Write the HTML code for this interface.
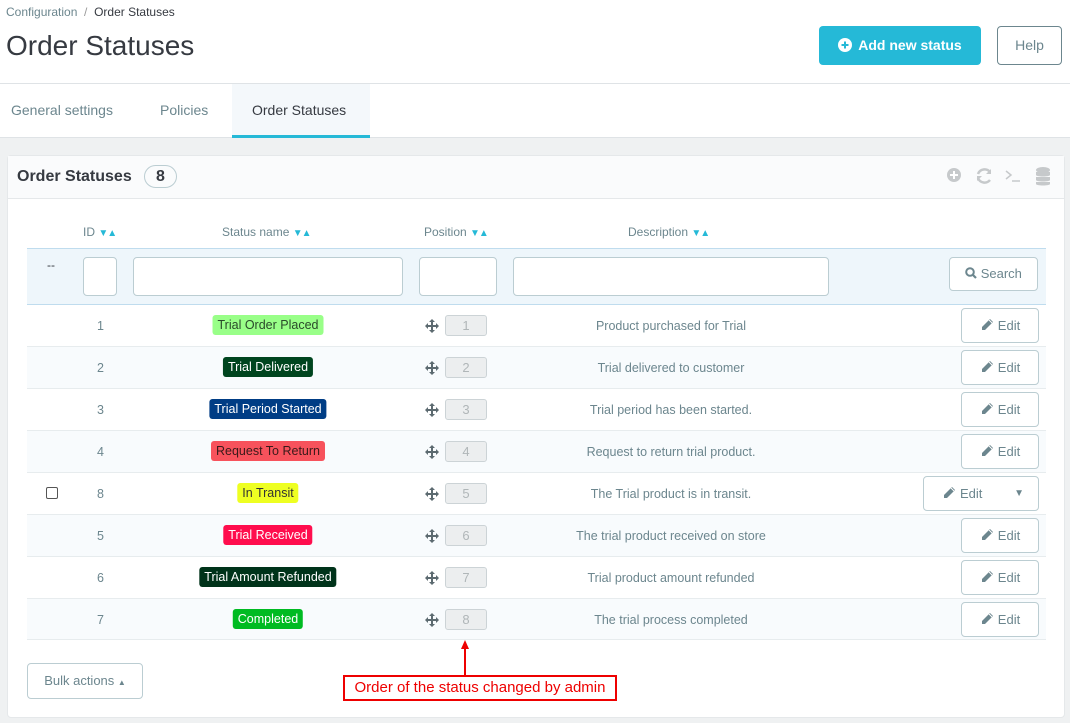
<!DOCTYPE html>
<html><head><meta charset="utf-8"><style>
*{box-sizing:border-box;margin:0;padding:0}
body{width:1070px;height:723px;background:#eff1f2;font-family:"Liberation Sans",sans-serif;position:relative;overflow:hidden;color:#363a41}
.a{position:absolute}
.top{left:0;top:0;width:1070px;height:138px;background:#fff;border-bottom:1px solid #dfe3e6}
.panel{left:7px;top:155px;width:1058px;height:563px;background:#fff;border:1px solid #e5e8ea;border-radius:4px}
.th{font-size:12px;color:#6c868e;top:225px}
.car{color:#25b9d7;font-size:10px;letter-spacing:-1px}
.inp{background:#fff;border:1px solid #bbcdd2;border-radius:4px;height:39px;top:257px}
.row{left:27px;width:1019px;height:42px;border-bottom:1px solid #e7ecee}
.c{font-size:12.5px;color:#6c868e;position:absolute;top:14px}
.bdg{position:absolute;top:10px;height:20px;line-height:20px;padding:0 5px;border-radius:3px;font-size:12.5px;transform:translateX(-50%)}
.pos{position:absolute;left:418px;top:10px;width:42px;height:21px;border:1px solid #ccd3d6;border-radius:3px;background:#eceeef;color:#b0b6b8;text-align:center;font-size:13px;line-height:19px}
.mv{position:absolute;left:398px;top:14px}
.edit{position:absolute;left:934px;top:3px;width:78px;height:35px;border:1px solid #bbcdd2;border-radius:4px;background:#fff;color:#6c868e;font-size:13px;line-height:33px;text-align:center}
.edit svg{vertical-align:-2px;margin-right:4px}
.desc{position:absolute;left:486px;width:316px;text-align:center;top:14px;font-size:12.5px;color:#6c868e}
</style></head><body>
<div class="a top"></div>
<div class="a" style="left:6px;top:5px;font-size:12px;color:#6c868e">Configuration &nbsp;<span style="color:#999">/</span>&nbsp; <span style="color:#363a41">Order Statuses</span></div>
<div class="a" style="left:6px;top:30px;font-size:28px;color:#363a41">Order Statuses</div>
<div class="a" style="left:819px;top:26px;width:162px;height:39px;background:#25b9d7;border-radius:4px;color:#fff;font-size:14px;font-weight:bold;line-height:39px;text-align:center"><svg width="14" height="14" style="vertical-align:-2px;margin-right:6px"><circle cx="7" cy="7" r="7" fill="#fff"/><path d="M7 3.5v7M3.5 7h7" stroke="#25b9d7" stroke-width="2"/></svg>Add new status</div>
<div class="a" style="left:997px;top:26px;width:65px;height:39px;border:1px solid #6c868e;border-radius:4px;color:#6c868e;font-size:14px;line-height:37px;text-align:center">Help</div>
<div class="a" style="left:0;top:83px;width:1070px;height:1px;background:#dfe3e6"></div>
<div class="a" style="left:232px;top:84px;width:138px;height:54px;background:#f4f8fb;border-bottom:3px solid #25b9d7"></div>
<div class="a" style="left:11px;top:102px;font-size:14px;color:#6c868e">General settings</div>
<div class="a" style="left:160px;top:102px;font-size:14px;color:#6c868e">Policies</div>
<div class="a" style="left:252px;top:102px;font-size:14px;color:#363a41">Order Statuses</div>

<div class="a panel"></div>
<div class="a" style="left:8px;top:156px;width:1056px;height:43px;background:#fafbfc;border-bottom:1px solid #e5e8ea"></div>
<div class="a" style="left:17px;top:168px;font-size:16px;font-weight:bold;color:#363a41">Order Statuses</div>
<div class="a" style="left:144px;top:165px;width:33px;height:23px;border:1px solid #bbcdd2;border-radius:12px;text-align:center;font-size:16px;font-weight:bold;line-height:21px">8</div>
<svg class="a" style="left:946px;top:166px" width="110" height="22">
<circle cx="8" cy="9" r="7" fill="#c6c9cb"/><path d="M8 5v8M4 9h8" stroke="#fff" stroke-width="2"/>
<path d="M44 6a7 7 0 0 0-12 2M32 12a7 7 0 0 0 12 2" stroke="#c6c9cb" stroke-width="2.5" fill="none"/><path d="M45 3v5h-5zM31 15v-5h5z" fill="#c6c9cb"/>
<path d="M60 5l5 4-5 4M66 15h8" stroke="#c6c9cb" stroke-width="1.5" fill="none"/>
<ellipse cx="97" cy="4" rx="7" ry="3" fill="#c6c9cb"/><path d="M90 6v3c0 2 14 2 14 0v-3M90 11v3c0 2 14 2 14 0v-3M90 16v2c0 2 14 2 14 0v-2" fill="#c6c9cb"/>
</svg>

<div class="a th" style="left:83px">ID <span class="car">▼▲</span></div>
<div class="a th" style="left:222px">Status name <span class="car">▼▲</span></div>
<div class="a th" style="left:424px">Position <span class="car">▼▲</span></div>
<div class="a th" style="left:628px">Description <span class="car">▼▲</span></div>
<div class="a" style="left:27px;top:248px;width:1019px;height:57px;background:#eef6fb;border-top:1px solid #bfdcee;border-bottom:1px solid #bfdcee"></div>
<div class="a" style="left:47px;top:258px;font-size:12px;color:#363a41">--</div>
<div class="a inp" style="left:83px;width:34px"></div>
<div class="a inp" style="left:133px;width:270px"></div>
<div class="a inp" style="left:419px;width:78px"></div>
<div class="a inp" style="left:513px;width:316px"></div>
<div class="a" style="left:949px;top:257px;width:89px;height:34px;background:#fff;border:1px solid #bbcdd2;border-radius:4px;color:#6c868e;font-size:13px;line-height:32px;text-align:center"><svg width="12" height="12" style="vertical-align:-1px"><circle cx="5" cy="5" r="3.8" stroke="#6c868e" stroke-width="2" fill="none"/><path d="M8 8l3 3" stroke="#6c868e" stroke-width="2.2"/></svg> Search</div>

<svg width="0" height="0" style="position:absolute"><defs>
<symbol id="pen" viewBox="0 0 14 14"><path d="M10 1l3 3-8 8H2V9z" fill="#6c868e"/><path d="M9 2l3 3" stroke="#fff" stroke-width="1"/></symbol>
<symbol id="mv" viewBox="0 0 14 14"><path d="M7 0l3 3H8v3h3V4l3 3-3 3V8H8v3h2l-3 3-3-3h2V8H3v2L0 7l3-3v2h3V3H4z" fill="#5c6a70"/></symbol>
</defs></svg>

<div class="a" style="left:0;top:305px">
<div class="a row" style="top:0;background:#fff"><span class="c" style="left:70px">1</span><span class="bdg" style="left:241px;background:#99ff88;color:#2a4a2a">Trial Order Placed</span>
<svg class="mv" width="14" height="14"><use href="#mv"/></svg><span class="pos">1</span><span class="desc">Product purchased for Trial</span><span class="edit"><svg width="14" height="14"><use href="#pen"/></svg>Edit</span></div>
<div class="a row" style="top:42px;background:#f8fbfd"><span class="c" style="left:70px">2</span><span class="bdg" style="left:241px;background:#00451f;color:#fff">Trial Delivered</span>
<svg class="mv" width="14" height="14"><use href="#mv"/></svg><span class="pos">2</span><span class="desc">Trial delivered to customer</span><span class="edit"><svg width="14" height="14"><use href="#pen"/></svg>Edit</span></div>
<div class="a row" style="top:84px;background:#fff"><span class="c" style="left:70px">3</span><span class="bdg" style="left:241px;background:#003d85;color:#fff">Trial Period Started</span>
<svg class="mv" width="14" height="14"><use href="#mv"/></svg><span class="pos">3</span><span class="desc">Trial period has been started.</span><span class="edit"><svg width="14" height="14"><use href="#pen"/></svg>Edit</span></div>
<div class="a row" style="top:126px;background:#f8fbfd"><span class="c" style="left:70px">4</span><span class="bdg" style="left:241px;background:#f7525c;color:#3a1a1a">Request To Return</span>
<svg class="mv" width="14" height="14"><use href="#mv"/></svg><span class="pos">4</span><span class="desc">Request to return trial product.</span><span class="edit"><svg width="14" height="14"><use href="#pen"/></svg>Edit</span></div>
<div class="a row" style="top:168px;background:#fff"><span style="position:absolute;left:19px;top:14px;width:12px;height:12px;border:1px solid #555;border-radius:2px"></span><span class="c" style="left:70px">8</span><span class="bdg" style="left:241px;background:#eeff22;color:#333">In Transit</span>
<svg class="mv" width="14" height="14"><use href="#mv"/></svg><span class="pos">5</span><span class="desc">The Trial product is in transit.</span><span class="edit" style="left:896px;width:116px;text-align:left;padding-left:18px"><svg width="14" height="14"><use href="#pen"/></svg>Edit<span style="position:absolute;right:14px;font-size:10px">▼</span></span></div>
<div class="a row" style="top:210px;background:#f8fbfd"><span class="c" style="left:70px">5</span><span class="bdg" style="left:241px;background:#ff0d4d;color:#fff">Trial Received</span>
<svg class="mv" width="14" height="14"><use href="#mv"/></svg><span class="pos">6</span><span class="desc">The trial product received on store</span><span class="edit"><svg width="14" height="14"><use href="#pen"/></svg>Edit</span></div>
<div class="a row" style="top:252px;background:#fff"><span class="c" style="left:70px">6</span><span class="bdg" style="left:241px;background:#00331a;color:#fff">Trial Amount Refunded</span>
<svg class="mv" width="14" height="14"><use href="#mv"/></svg><span class="pos">7</span><span class="desc">Trial product amount refunded</span><span class="edit"><svg width="14" height="14"><use href="#pen"/></svg>Edit</span></div>
<div class="a row" style="top:294px;height:41px;background:#f8fbfd"><span class="c" style="left:70px">7</span><span class="bdg" style="left:241px;background:#00bb22;color:#fff">Completed</span>
<svg class="mv" width="14" height="14"><use href="#mv"/></svg><span class="pos">8</span><span class="desc">The trial process completed</span><span class="edit"><svg width="14" height="14"><use href="#pen"/></svg>Edit</span></div>
</div>

<div class="a" style="left:27px;top:663px;width:116px;height:36px;border:1px solid #bbcdd2;border-radius:4px;color:#6c868e;font-size:13px;line-height:34px;text-align:center">Bulk actions <span style="font-size:8px">▲</span></div>
<svg class="a" style="left:458px;top:640px" width="14" height="36"><path d="M7 4v32" stroke="#e00" stroke-width="2"/><path d="M7 0l4 9H3z" fill="#e00"/></svg>
<div class="a" style="left:343px;top:675px;width:274px;height:26px;border:2px solid #e00;background:#fff;color:#e00;font-size:15px;line-height:22px;text-align:center;white-space:nowrap">Order of the status changed by admin</div>
</body></html>
